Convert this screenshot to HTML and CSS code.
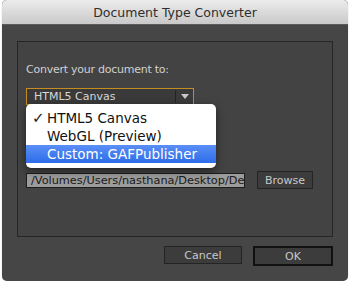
FILE: index.html
```html
<!DOCTYPE html>
<html lang="en">
<head>
    <meta charset="UTF-8">
    <title>Document Type Converter</title>
    <link rel="stylesheet" href="styles.css">
</head>
<body>
    <div class="window">
        <div class="titlebar">Document Type Converter</div>
        <div class="content">
            <div class="panel">
                <p class="label">Convert your document to:</p>
                <div class="select-wrap">
                    <div class="select">
                        <span class="select-text">HTML5 Canvas</span>
                        <span class="select-arrow"></span>
                    </div>
                    <ul class="menu">
                        <li><span class="check">✓</span>HTML5 Canvas</li>
                        <li>WebGL (Preview)</li>
                        <li class="active">Custom: GAFPublisher</li>
                    </ul>
                </div>
                <div class="path-row">
                    <div class="path">/Volumes/Users/nasthana/Desktop/De</div>
                    <button class="btn">Browse</button>
                </div>
            </div>
            <div class="actions">
                <button class="btn btn-wide">Cancel</button>
                <button class="btn btn-wide btn-default">OK</button>
            </div>
        </div>
    </div>
</body>
</html>
```

FILE: styles.css
```css
body {
    margin: 0;
    background: #ffffff;
    font-family: "DejaVu Sans", "Liberation Sans", sans-serif;
}

.window {
    margin: 0 2px;
    height: 281px;
    background: #464646;
    border-radius: 5px;
    overflow: hidden;
    box-shadow: 0 0 1px #999;
}

.titlebar {
    height: 24px;
    line-height: 25px;
    text-align: center;
    font-size: 12.5px;
    color: #2e2e2e;
    background: linear-gradient(#ececec, #c9c9c9);
    border-bottom: 1px solid #5a5a5a;
}

.content {
    padding: 16px 15px 0 15px;
}

.panel {
    height: 194px;
    background: #434343;
    border: 1px solid #262626;
    padding: 0 8px;
}

.label {
    margin: 21px 0 0 0;
    font-size: 11px;
    letter-spacing: -0.25px;
    color: #d0d0d0;
}

.select-wrap {
    position: relative;
    margin-top: 12px;
}

.select {
    width: 166px;
    height: 15px;
    display: flex;
    align-items: center;
    background: #3a3a3a;
    border: 1px solid #c58d1f;
}

.select-text {
    flex: 1;
    padding-left: 7px;
    font-size: 11px;
    color: #d8d8d8;
}

.select-arrow {
    width: 17px;
    height: 13px;
    border-left: 1px solid #242424;
    position: relative;
}

.select-arrow::after {
    content: "";
    position: absolute;
    left: 5px;
    top: 4px;
    border-left: 4px solid transparent;
    border-right: 4px solid transparent;
    border-top: 5px solid #c8c8c8;
}

.menu {
    position: absolute;
    left: 0;
    top: 16px;
    width: 190px;
    margin: 0;
    padding: 5px 0 5px 0;
    list-style: none;
    background: #ffffff;
    border-radius: 5px;
    box-shadow: 0 3px 8px rgba(0, 0, 0, 0.5);
    font-size: 13.5px;
    color: #111;
}

.menu li {
    height: 18px;
    line-height: 18px;
    padding-left: 21px;
    position: relative;
}

.check {
    position: absolute;
    left: 6px;
    font-size: 15px;
    font-weight: bold;
    color: #222;
}

.menu li.active {
    color: #ffffff;
    background: linear-gradient(#5a8ff6, #2d6ce8);
}

.path-row {
    display: flex;
    align-items: center;
    margin-top: 66px;
}

.path {
    width: 213px;
    height: 13px;
    line-height: 13px;
    overflow: hidden;
    white-space: nowrap;
    padding-left: 4px;
    background: #9c9c9c;
    border: 1px solid #1e1e1e;
    font-size: 11.3px;
    color: #1a1a1a;
}

.btn {
    height: 18px;
    padding: 0;
    background: #3c3c3c;
    border: 1px solid #242424;
    color: #c8c8c8;
    font-family: "DejaVu Sans", "Liberation Sans", sans-serif;
    font-size: 11px;
}

.path-row .btn {
    width: 56px;
    margin-left: 12px;
}

.actions {
    display: flex;
    justify-content: flex-end;
    gap: 11px;
    margin-top: 9px;
}

.btn-wide {
    width: 78px;
}

.btn-default {
    width: 80px;
    height: 20px;
    border: 2px solid #111;
}
```
